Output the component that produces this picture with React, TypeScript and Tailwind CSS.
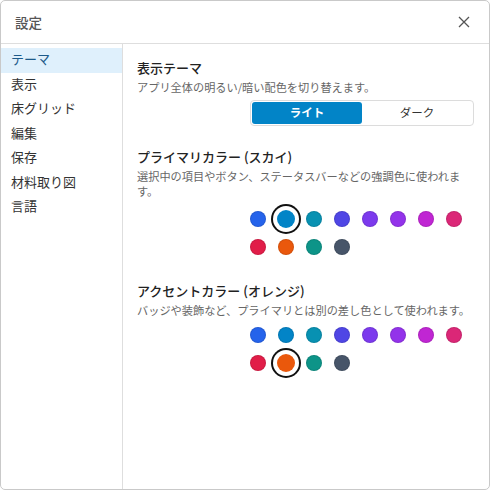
import React from "react";

const colors = [
  "#2563eb",
  "#0284c7",
  "#0891b2",
  "#4f46e5",
  "#7c3aed",
  "#9333ea",
  "#c026d3",
  "#db2777",
  "#e11d48",
  "#ea580c",
  "#0d9488",
  "#475569",
];

function Swatches({ selected }: { selected: number }) {
  return (
    <div className="flex justify-end">
      <div className="w-[224px] flex flex-wrap gap-x-[12px] gap-y-[12px]">
        {colors.map((c, i) => (
          <div key={c} className="w-4 h-4 flex items-center justify-center">
            {i === selected ? (
              <div
                className="w-[18px] h-[18px] shrink-0 rounded-full ring-2 ring-[#111] ring-offset-4 ring-offset-white"
                style={{ backgroundColor: c }}
              />
            ) : (
              <div className="w-4 h-4 shrink-0 rounded-full border border-black/10" style={{ backgroundColor: c }} />
            )}
          </div>
        ))}
      </div>
    </div>
  );
}

export default function App() {
  const items = ["テーマ", "表示", "床グリッド", "編集", "保存", "材料取り図", "言語"];
  return (
    <div
      className="w-[490px] h-[490px] bg-white border border-[#c9c9c9] rounded-[5px] flex flex-col overflow-hidden"
      style={{ fontFamily: '"Noto Sans CJK JP", "Noto Sans", sans-serif' }}
    >
      <div className="h-[43px] shrink-0 border-b border-[#dedede] flex items-center justify-between pl-[14px] pr-[19px]">
        <span className="text-[13.5px] font-medium text-[#555]">設定</span>
        <svg width="12" height="12" viewBox="0 0 12 12" className="text-[#555]">
          <path d="M1 1 L11 11 M11 1 L1 11" stroke="currentColor" strokeWidth="1.3" fill="none" />
        </svg>
      </div>
      <div className="flex flex-1 min-h-0">
        <div className="w-[122px] shrink-0 border-r border-[#dedede] pt-[4px] flex flex-col">
          {items.map((t, i) => (
            <div
              key={t}
              className={
                "h-[24.5px] pl-[10px] text-[13px] leading-[22px] " +
                (i === 0 ? "bg-[#dff0fc] text-[#1d5a8a]" : "text-[#333]")
              }
            >
              {t}
            </div>
          ))}
        </div>
        <div className="flex-1 pl-[14px] pr-[15px] pt-[14px]">
          <div className="text-[13px] leading-5 font-medium text-[#222]">表示テーマ</div>
          <div className="mt-[2px] text-[11.2px] leading-[15px] text-[#666]">
            アプリ全体の明るい/暗い配色を切り替えます。
          </div>
          <div className="flex justify-end mt-[5px]">
            <div className="w-[224px] h-[26px] border border-[#dcdcdc] rounded-[4px] p-[1px] flex">
              <div className="flex-1 rounded-[3px] bg-[#0284c7] text-white text-[11.5px] font-bold flex items-center justify-center">
                ライト
              </div>
              <div className="flex-1 text-[#333] text-[11.5px] flex items-center justify-center">ダーク</div>
            </div>
          </div>

          <div className="mt-[21px] text-[13px] leading-5 font-medium text-[#222]">プライマリカラー (スカイ)</div>
          <div className="mt-[2px] text-[11.2px] leading-[15px] text-[#666]">
            選択中の項目やボタン、ステータスバーなどの強調色に使われます。
          </div>
          <div className="mt-[12px]">
            <Swatches selected={1} />
          </div>

          <div className="mt-[26px] text-[13px] leading-5 font-medium text-[#222]">アクセントカラー (オレンジ)</div>
          <div className="mt-[2px] text-[11.2px] leading-[15px] text-[#666]">
            バッジや装飾など、プライマリとは別の差し色として使われます。
          </div>
          <div className="mt-[9px]">
            <Swatches selected={9} />
          </div>
        </div>
      </div>
    </div>
  );
}
